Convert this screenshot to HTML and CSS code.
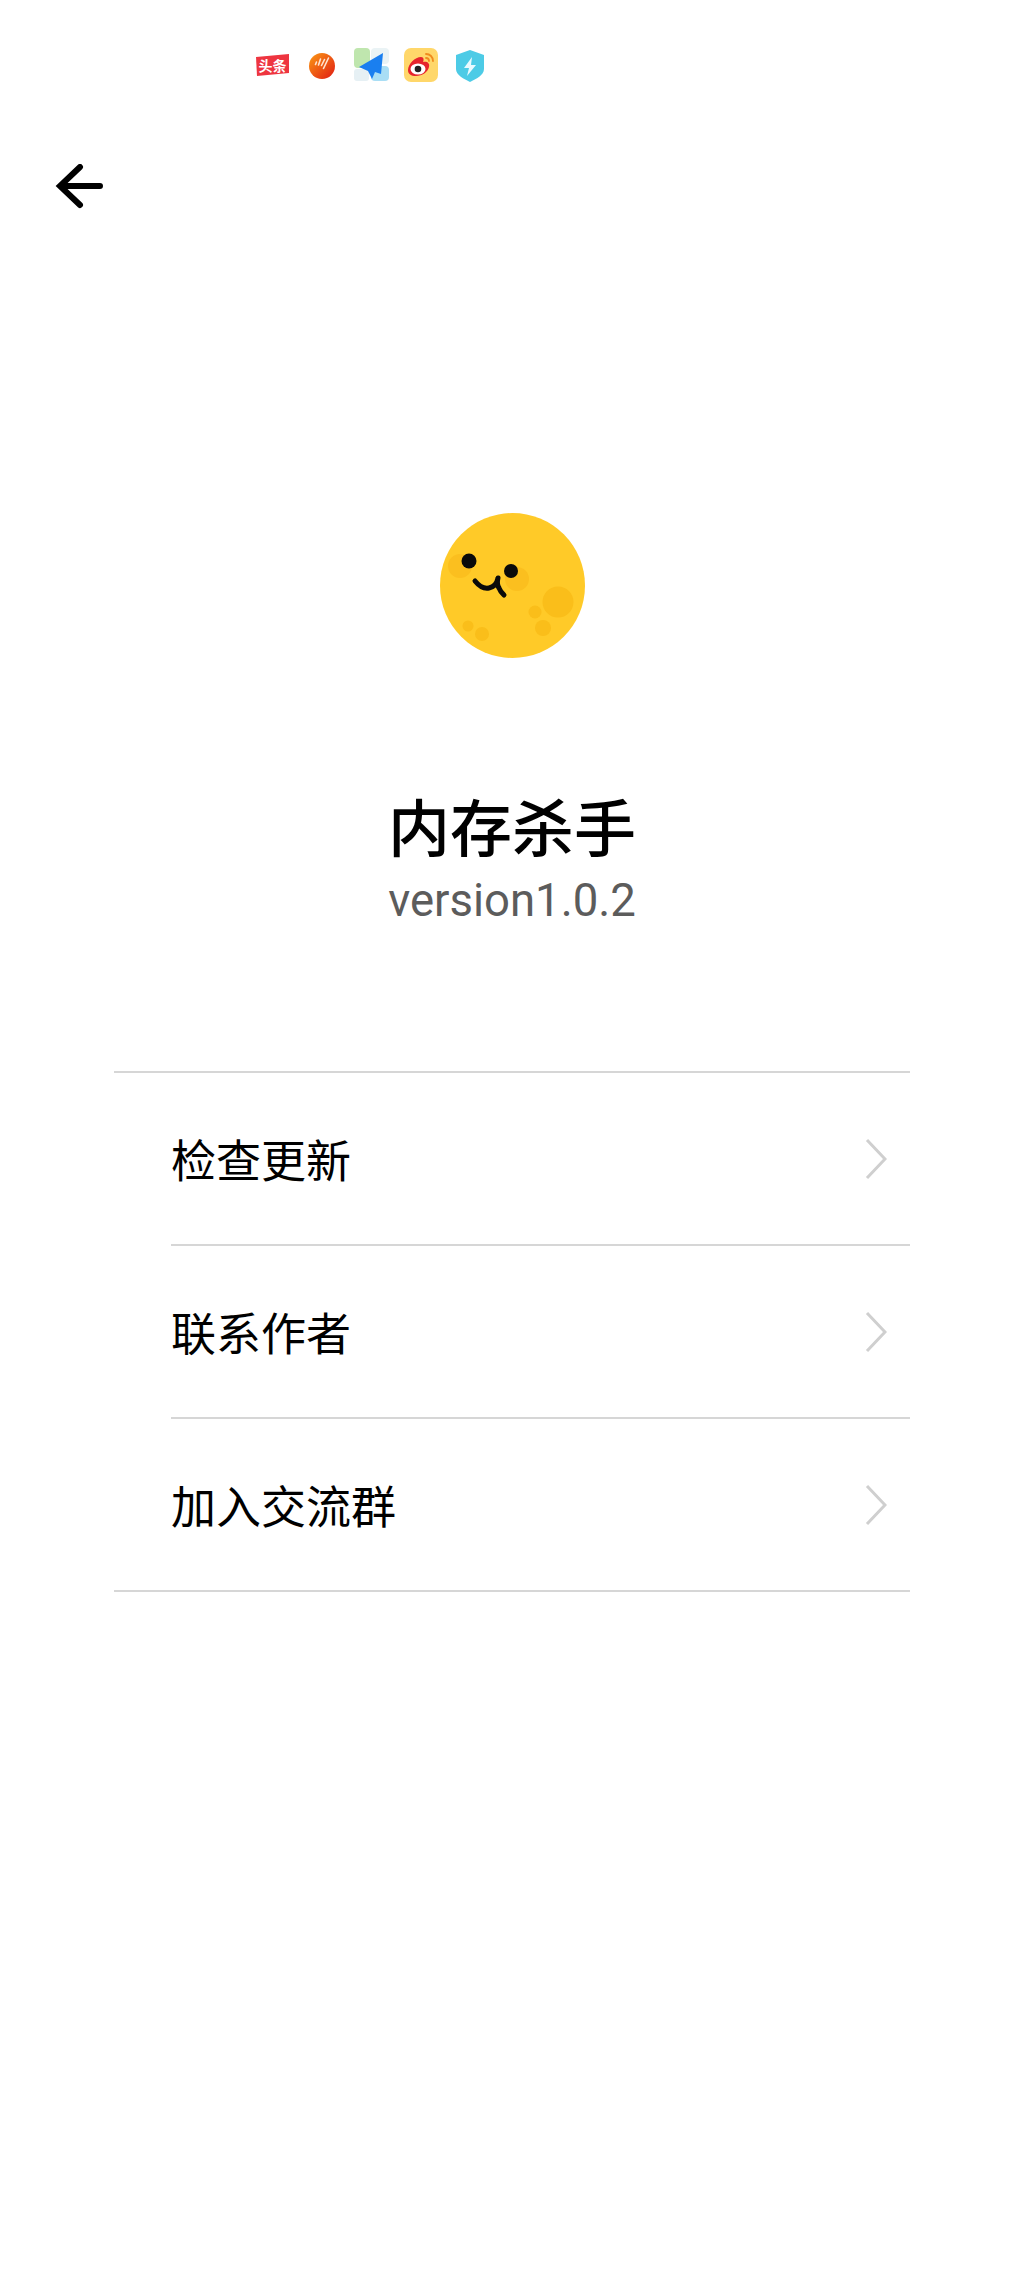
FILE: index.html
```html
<!DOCTYPE html>
<html lang="zh">
<head>
<meta charset="utf-8">
<title>内存杀手</title>
<link rel="stylesheet" href="styles.css">
</head>
<body>
<div class="status">
  <svg class="ico ico-toutiao" viewBox="0 0 33 22"><path d="M0 3 33 0v19L1 22z" fill="#ee3540"/><text x="16.500" y="17" text-anchor="middle" class="ico-text">头条</text></svg>
  <svg class="ico ico-round" viewBox="0 0 26 26"><defs><linearGradient id="rg" x1="0" y1="0" x2="1" y2="1"><stop offset="0" stop-color="#fb9a14"/><stop offset="1" stop-color="#e01a14"/></linearGradient></defs><circle cx="13" cy="13" r="13" fill="url(#rg)"/><path d="M7.500 9 6.500 11.500M11.500 6 9.500 12M19.500 5 14.500 15.500M15.500 6.500 12.500 12.500" stroke="#ffe3cf" stroke-width="1.600" stroke-linecap="round"/></svg>
  <svg class="ico ico-plane" viewBox="0 0 35 33"><rect x="0" y="0" width="16" height="20" rx="4" fill="#bfe6ae"/><rect x="17" y="0" width="18" height="16" rx="4" fill="#eaf3f5"/><rect x="0" y="21" width="15" height="12" rx="3" fill="#e6f0f4"/><rect x="17" y="18" width="18" height="15" rx="4" fill="#a9def5"/><path d="M29 5 5 19l9 4 4 8 3-7 6 2z" fill="#1a7ff0"/></svg>
  <svg class="ico ico-weibo" viewBox="0 0 34 34"><rect width="34" height="34" rx="7" fill="#ffd76a"/><path d="M4 22c0-6 7-13 13-13 3 0 3 3 2 5 4-1 7 1 6 5-1 5-7 9-13 9-5 0-8-2-8-6z" fill="#e6242c"/><ellipse cx="14" cy="21" rx="7.500" ry="5.500" fill="#fff"/><circle cx="14" cy="21" r="3.300" fill="#222"/><path d="M22 6c4 0 7 3 7 7M22 10c2 0 3 1 3 3" stroke="#f08a1d" stroke-width="1.800" fill="none" stroke-linecap="round"/></svg>
  <svg class="ico ico-shield" viewBox="0 0 28 32"><path d="M14 0 28 5v14c0 6-8 10-14 13C8 29 0 25 0 19V5z" fill="#4dcbe6"/><path d="M16 7 8 18h5l-2 8 9-11h-5z" fill="#eafaff"/></svg>
</div>

<header class="topbar">
  <svg class="back" viewBox="0 0 50 46"><path d="M45 22H6M25 3 5 22l20 19" fill="none" stroke="#000" stroke-width="6" stroke-linecap="round"/></svg>
</header>

<main class="about">
  <svg class="moon" viewBox="0 0 145 145">
    <circle cx="72.500" cy="72.500" r="72.500" fill="#ffca28"/>
    <circle cx="20" cy="53" r="12" fill="#fbbf1f"/>
    <circle cx="77" cy="66" r="12" fill="#fbbf1f"/>
    <circle cx="118" cy="89" r="15.500" fill="#fabe1a"/>
    <circle cx="95" cy="99" r="6.500" fill="#fabe1a"/>
    <circle cx="103" cy="115" r="8" fill="#fabe1a"/>
    <circle cx="28" cy="113" r="5.500" fill="#fabe1a"/>
    <circle cx="42" cy="121" r="7" fill="#fabe1a"/>
    <circle cx="29" cy="48" r="7.500" fill="#0a0a0a"/>
    <circle cx="71" cy="58" r="7" fill="#0a0a0a"/>
    <path d="M35 68c4 5 9 8 14 7 5-1 8-5 9-10-1 4-1 7 1 10 1 3 3 5 5 7" fill="none" stroke="#0a0a0a" stroke-width="5" stroke-linecap="round" stroke-linejoin="round"/>
  </svg>
  <h1 class="title">内存杀手</h1>
  <p class="version">version1.0.2</p>
  <ul class="menu">
    <li class="row"><span class="label">检查更新</span><svg class="chev" viewBox="0 0 22 42"><path d="M2 2l18 19L2 40" fill="none" stroke="#cfcfcf" stroke-width="3"/></svg></li>
    <li class="row"><span class="label">联系作者</span><svg class="chev" viewBox="0 0 22 42"><path d="M2 2l18 19L2 40" fill="none" stroke="#cfcfcf" stroke-width="3"/></svg></li>
    <li class="row"><span class="label">加入交流群</span><svg class="chev" viewBox="0 0 22 42"><path d="M2 2l18 19L2 40" fill="none" stroke="#cfcfcf" stroke-width="3"/></svg></li>
  </ul>
</main>
</body>
</html>
```
FILE: styles.css
```css
* { box-sizing: border-box; }
html, body { margin: 0; padding: 0; }
body {
  width: 1024px;
  height: 2276px;
  background: #fff;
  color: #000;
  font-family: "Roboto", "Noto Sans CJK SC", sans-serif;
  overflow: hidden;
}
.status {
  height: 130px;
  padding: 48px 0 0 256px;
  display: flex;
  align-items: flex-start;
}
.ico { display: block; flex: none; }
.ico-text { font: 700 14px "Noto Sans CJK SC", sans-serif; fill: #fff; }
.ico-toutiao { width: 33px; height: 22px; margin: 6px 20px 0 0; }
.ico-round { width: 26px; height: 26px; margin: 5px 19px 0 0; }
.ico-plane { width: 35px; height: 33px; margin: 0 15px 0 0; }
.ico-weibo { width: 34px; height: 34px; margin: 0 18px 0 0; }
.ico-shield { width: 28px; height: 32px; margin: 2px 0 0 0; }
.topbar {
  height: 380px;
  padding: 34px 0 0 55px;
}
.back { display: block; width: 50px; height: 46px; }
.about {
  display: flex;
  flex-direction: column;
  align-items: center;
}
.moon { display: block; width: 145px; height: 145px; margin-top: 3px; }
.title {
  margin: 127px 0 0;
  font: 500 62px/80px "Noto Sans CJK SC", sans-serif;
}
.version {
  margin: 6px 0 0;
  font: 400 45.500px/60px "Roboto", sans-serif;
  color: #5c5c5c;
}
.menu {
  list-style: none;
  margin: 140px 0 0;
  padding: 0 0 0 57px;
  width: 796px;
  border-top: 2px solid #d6d6d6;
  border-bottom: 2px solid #d6d6d6;
}
.row {
  height: 173px;
  display: flex;
  align-items: center;
  justify-content: space-between;
  padding-right: 23px;
  border-bottom: 2px solid #d6d6d6;
}
.row:last-child { border-bottom: 0; height: 171px; }
.label { font: 400 45px/60px "Noto Sans CJK SC", sans-serif; color: #000; }
.chev { display: block; width: 22px; height: 42px; }
```
